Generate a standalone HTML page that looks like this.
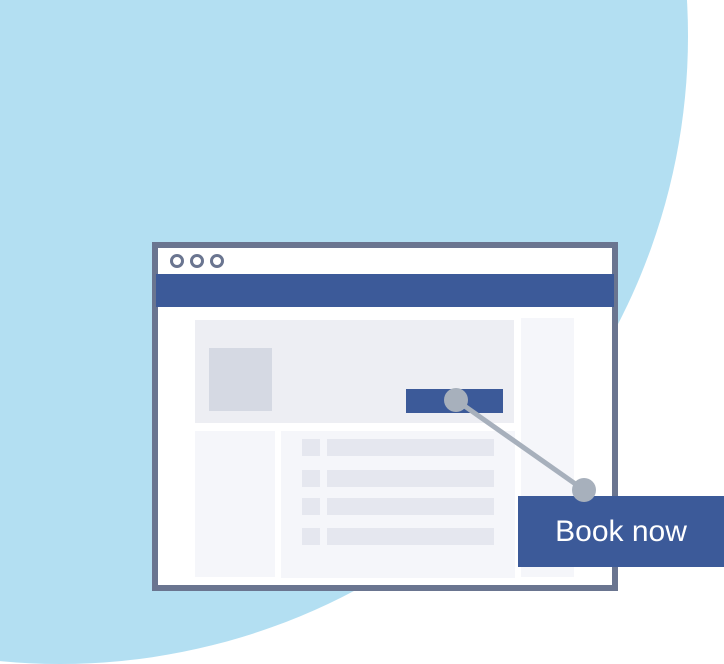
<!DOCTYPE html>
<html><head><style>
body{margin:0;width:724px;height:664px;overflow:hidden;background:#fff;position:relative;font-family:"Liberation Sans",sans-serif}
div{position:absolute}
</style></head><body>
<div style="left:-568px;top:-592px;width:1256px;height:1256px;border-radius:50%;background:#b3dff2"></div>
<div style="left:152px;top:242px;width:454px;height:337px;border:6px solid #6a7590;background:#fff"></div>
<div style="left:156px;top:274px;width:458px;height:33px;background:#3c5a99"></div>
<div style="left:170px;top:254px;width:8px;height:8px;border:3px solid #6a7590;border-radius:50%"></div>
<div style="left:190px;top:254px;width:8px;height:8px;border:3px solid #6a7590;border-radius:50%"></div>
<div style="left:210px;top:254px;width:8px;height:8px;border:3px solid #6a7590;border-radius:50%"></div>
<div style="left:195px;top:320px;width:319px;height:103px;background:#edeef3"></div>
<div style="left:209px;top:348px;width:63px;height:63px;background:#d5d9e3"></div>
<div style="left:406px;top:389px;width:97px;height:24px;background:#3c5a99"></div>
<div style="left:521px;top:318px;width:53px;height:259px;background:#f5f6fa"></div>
<div style="left:195px;top:431px;width:80px;height:146px;background:#f5f6fa"></div>
<div style="left:281px;top:431px;width:234px;height:147px;background:#f5f6fa"></div>
<div style="left:302px;top:439px;width:18px;height:17px;background:#e5e7ef"></div>
<div style="left:327px;top:439px;width:167px;height:17px;background:#e5e7ef"></div>
<div style="left:302px;top:470px;width:18px;height:17px;background:#e5e7ef"></div>
<div style="left:327px;top:470px;width:167px;height:17px;background:#e5e7ef"></div>
<div style="left:302px;top:498px;width:18px;height:17px;background:#e5e7ef"></div>
<div style="left:327px;top:498px;width:167px;height:17px;background:#e5e7ef"></div>
<div style="left:302px;top:528px;width:18px;height:17px;background:#e5e7ef"></div>
<div style="left:327px;top:528px;width:167px;height:17px;background:#e5e7ef"></div>
<svg style="position:absolute;left:0;top:0" width="724" height="664">
<line x1="456" y1="400" x2="584" y2="490" stroke="#a7b0bc" stroke-width="5"/>
<circle cx="456" cy="400" r="12" fill="#a7b0bc"/>
</svg>
<div style="left:518px;top:496px;width:206px;height:71px;background:#3c5a99;color:#fff;font-size:30px;line-height:71px;text-align:center;padding-left:0">Book now</div>
<svg style="position:absolute;left:0;top:0" width="724" height="664">
<circle cx="584" cy="490" r="12" fill="#a7b0bc"/>
</svg>
</body></html>
